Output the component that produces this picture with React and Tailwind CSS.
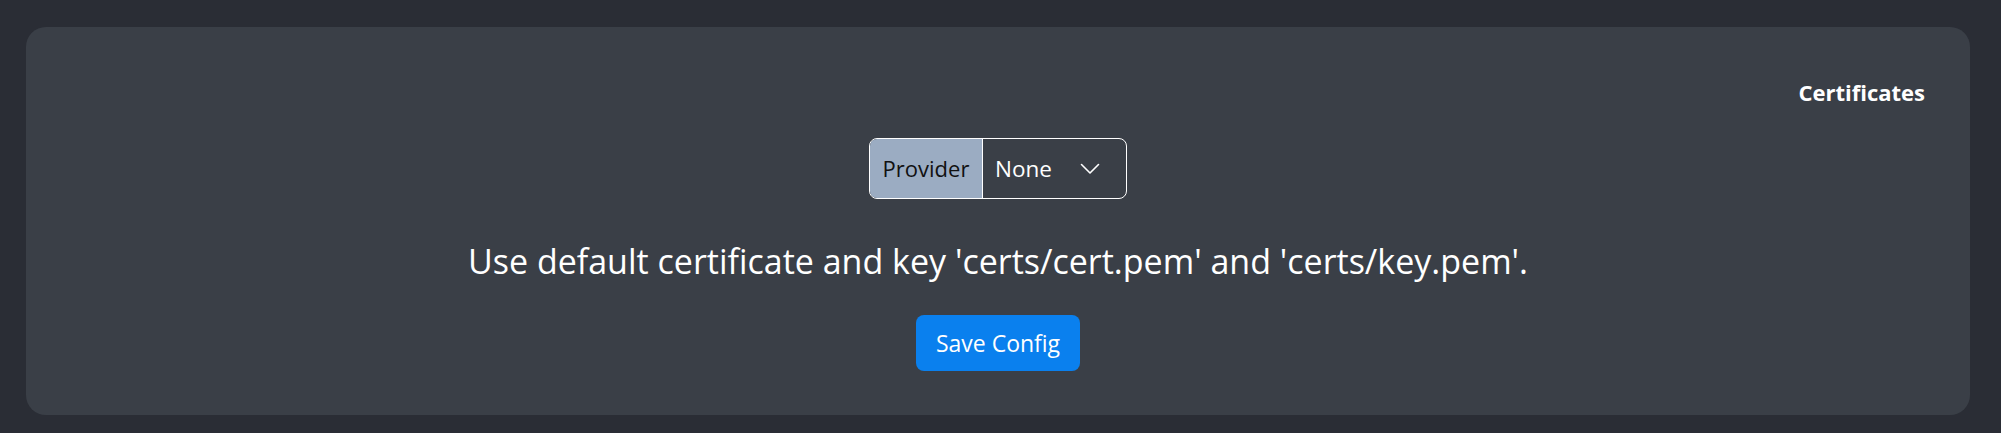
import React from "react";

export default function App() {
  return (
    <div
      className="min-h-screen bg-[#2a2d35] pt-[27px] pl-[26px] pr-[31px] pb-[18px] text-white"
      style={{ fontFamily: '"Open Sans", "Noto Sans", sans-serif' }}
    >
      <div className="h-[388px] rounded-[20px] bg-[#3a3f47] px-[45px] pt-[51px]">
        {/* Header */}
        <div className="flex justify-end">
          <h5 className="text-[22px] leading-[28px] font-bold">Certificates</h5>
        </div>

        {/* Provider select */}
        <div className="mt-[32px] flex justify-center">
          <div className="flex h-[61px] w-[258px] overflow-hidden rounded-[8px] border border-white">
            <span className="flex w-[113px] items-center justify-center border-r border-white bg-[#9bacc2] text-[22px] text-[#111]">
              Provider
            </span>
            <div className="flex flex-1 items-center pl-[12px] pr-[26px]">
              <span className="text-[22.5px]">None</span>
              <svg
                className="ml-auto"
                width="20"
                height="12"
                viewBox="0 0 20 12"
                fill="none"
                stroke="white"
                strokeWidth="1.6"
                strokeLinecap="round"
                strokeLinejoin="round"
              >
                <path d="M1.5 1.5 L10 10 L18.5 1.5" />
              </svg>
            </div>
          </div>
        </div>

        {/* Description */}
        <p className="mt-[40px] text-center text-[34px] leading-[44px]">
          Use default certificate and key 'certs/cert.pem' and 'certs/key.pem'.
        </p>

        {/* Save button */}
        <div className="mt-[32px] flex justify-center">
          <button className="h-[56px] w-[164px] rounded-[8px] bg-[#0a80ee] text-[23px] text-white">
            Save Config
          </button>
        </div>
      </div>
    </div>
  );
}
